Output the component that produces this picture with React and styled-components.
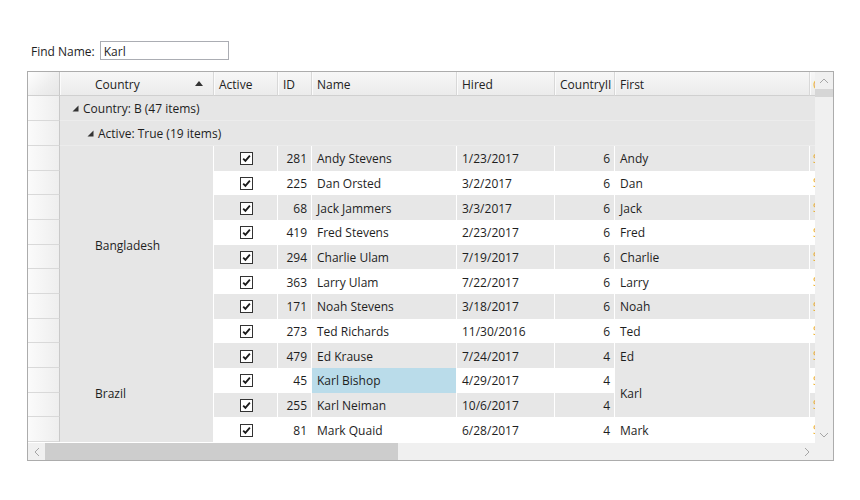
import React from 'react'
import styled, { createGlobalStyle } from 'styled-components'

const GlobalStyle = createGlobalStyle`
  html, body {
    margin: 0;
    padding: 0;
    background: #ffffff;
  }
  body {
    font-family: "Open Sans", "Noto Sans", sans-serif;
    font-size: 12px;
    color: #1e1e1e;
  }
`

const COLS = ['Country', 'Active', 'ID', 'Name', 'Hired', 'CountryII', 'First']

const groups = [
  {
    country: 'Bangladesh',
    rows: [
      [281, 'Andy Stevens', '1/23/2017', 6, 'Andy'],
      [225, 'Dan Orsted', '3/2/2017', 6, 'Dan'],
      [68, 'Jack Jammers', '3/3/2017', 6, 'Jack'],
      [419, 'Fred Stevens', '2/23/2017', 6, 'Fred'],
      [294, 'Charlie Ulam', '7/19/2017', 6, 'Charlie'],
      [363, 'Larry Ulam', '7/22/2017', 6, 'Larry'],
      [171, 'Noah Stevens', '3/18/2017', 6, 'Noah'],
      [273, 'Ted Richards', '11/30/2016', 6, 'Ted'],
    ],
  },
  {
    country: 'Brazil',
    rows: [
      [479, 'Ed Krause', '7/24/2017', 4, 'Ed'],
      [45, 'Karl Bishop', '4/29/2017', 4, 'Karl', 2],
      [255, 'Karl Neiman', '10/6/2017', 4, null],
      [81, 'Mark Quaid', '6/28/2017', 4, 'Mark'],
    ],
  },
]

const Triangle = () => (
  <svg width="7" height="7" viewBox="0 0 7 7">
    <polygon points="6.5,0.5 6.5,6.5 0.5,6.5" fill="#333" />
  </svg>
)

const SortUp = () => (
  <svg width="8" height="5" viewBox="0 0 8 5">
    <polygon points="4,0 8,5 0,5" fill="#333" />
  </svg>
)

const Check = () => (
  <CheckBox>
    <svg width="11" height="11" viewBox="0 0 11 11">
      <path d="M2.2 5.6 L4.4 7.9 L8.9 2.6" stroke="#1a1a1a" strokeWidth="1.8" fill="none" />
    </svg>
  </CheckBox>
)

const Chevron = ({ dir }) => {
  const d = {
    up: 'M1 5 L5 1 L9 5',
    down: 'M1 1 L5 5 L9 1',
    left: 'M5 1 L1 5 L5 9',
    right: 'M1 1 L5 5 L1 9',
  }[dir]
  const vertical = dir === 'up' || dir === 'down'
  return (
    <svg width={vertical ? 10 : 6} height={vertical ? 6 : 10} viewBox={vertical ? '0 0 10 6' : '0 0 6 10'}>
      <path d={d} stroke="#a6a6a6" strokeWidth="1" fill="none" />
    </svg>
  )
}

const App = () => {
  let index = 0
  const body = []

  groups.forEach((g) => {
    g.rows.forEach((r, i) => {
      const alt = index % 2 === 0
      const isSel = r[1] === 'Karl Bishop'
      body.push(<RowHead key={`rh${index}`} />)
      if (i === 0) {
        body.push(
          <CountryCell key={`c${index}`} $span={g.rows.length}>
            {g.country}
          </CountryCell>
        )
      }
      body.push(
        <Cell key={`a${index}`} $alt={alt} $align="center">
          <Check />
        </Cell>,
        <Cell key={`i${index}`} $alt={alt} $align="flex-end">{r[0]}</Cell>,
        <Cell key={`n${index}`} $alt={alt} $selected={isSel}>{r[1]}</Cell>,
        <Cell key={`h${index}`} $alt={alt}>{r[2]}</Cell>,
        <Cell key={`ci${index}`} $alt={alt} $align="flex-end">{r[3]}</Cell>
      )
      if (r[4] !== null) {
        body.push(
          <Cell key={`f${index}`} $alt={alt || r[5] > 1} $span={r[5] || 1}>
            {r[4]}
          </Cell>
        )
      }
      body.push(
        <EdgeCell key={`e${index}`} $alt={alt}>Seattle</EdgeCell>
      )
      index++
    })
  })

  return (
    <>
      <GlobalStyle />
      <Page>
        <FindBar>
          <FindLabel>Find Name:</FindLabel>
          <FindInput readOnly value="Karl" />
        </FindBar>
        <Frame>
          <Viewport>
            <Table>
              <CornerHead />
              {COLS.map((c) => (
                <HeaderCell key={c} $pad={c === 'Country' ? 35 : 5}>
                  <span>{c}</span>
                  {c === 'Country' && (
                    <SortMark>
                      <SortUp />
                    </SortMark>
                  )}
                </HeaderCell>
              ))}
              <HeaderCell $pad={3} $edge>
                <EdgeText>City</EdgeText>
              </HeaderCell>

              <RowHead />
              <GroupCell $indent={12}>
                <Triangle />
                Country: B (47 items)
              </GroupCell>
              <RowHead />
              <GroupCell $indent={27}>
                <Triangle />
                Active: True (19 items)
              </GroupCell>

              {body}
            </Table>
          </Viewport>
          <VScroll>
            <ArrowBox $v>
              <Chevron dir="up" />
            </ArrowBox>
            <VThumb />
            <Track />
            <ArrowBox $v>
              <Chevron dir="down" />
            </ArrowBox>
          </VScroll>
          <HScroll>
            <ArrowBox>
              <Chevron dir="left" />
            </ArrowBox>
            <HThumb />
            <Track />
            <ArrowBox>
              <Chevron dir="right" />
            </ArrowBox>
          </HScroll>
          <Corner />
        </Frame>
      </Page>
    </>
  )
}

export default App

const Page = styled.div`
  width: 860px;
  height: 500px;
  padding: 41px 0 0 27px;
  box-sizing: border-box;
`
const FindBar = styled.div`
  display: flex;
  align-items: center;
  height: 19px;
  padding-left: 4px;
  margin-bottom: 11px;
`
const FindLabel = styled.label`
  margin-right: 5px;
  font-size: 12px;
  padding-top: 1px;
`
const FindInput = styled.input`
  width: 129px;
  height: 19px;
  box-sizing: border-box;
  border: 1px solid #abadb3;
  padding: 1px 3px 0;
  font-family: "Open Sans", "Noto Sans", sans-serif;
  font-size: 12px;
  color: #1e1e1e;
  outline: none;
`
const Frame = styled.div`
  width: 807px;
  height: 390px;
  box-sizing: border-box;
  border: 1px solid #acacac;
  display: grid;
  grid-template-columns: 787px 18px;
  grid-template-rows: 371px 17px;
  background: #ffffff;
`
const Viewport = styled.div`
  overflow: hidden;
`
const Table = styled.div`
  display: grid;
  grid-template-columns: 32px 154px 64px 34px 145px 98px 60px 195px 5px;
  grid-template-rows: 24px 25px 25px repeat(12, 24.67px);
`
const CornerHead = styled.div`
  background: linear-gradient(135deg, #ffffff 0%, #eeeeee 60%, #e6e6e6 100%);
  border-right: 1px solid #c9c9c9;
  border-bottom: 1px solid #d0d0d0;
`
const HeaderCell = styled.div`
  display: flex;
  align-items: center;
  padding-left: ${(p) => p.$pad}px;
  padding-top: 1px;
  background: linear-gradient(#f7f7f7, #ebebeb);
  border-right: ${(p) => (p.$edge ? 'none' : '1px solid #d8d8d8')};
  border-bottom: 1px solid #d0d0d0;
  box-shadow: inset 1px 0 0 #fbfbfb;
  overflow: hidden;
  white-space: nowrap;
  color: #222;
`
const SortMark = styled.span`
  margin-left: auto;
  margin-right: 10px;
  display: flex;
  align-items: center;
  padding-bottom: 2px;
`
const EdgeText = styled.span`
  color: #e9a93b;
`
const RowHead = styled.div`
  background: linear-gradient(to right, #fbfbfb, #eeeeee);
  border-right: 1px solid #c9c9c9;
  border-bottom: 1px solid #d9d9d9;
`
const GroupCell = styled.div`
  grid-column: 2 / -1;
  display: flex;
  align-items: center;
  gap: 4px;
  padding-left: ${(p) => p.$indent}px;
  padding-top: 1px;
  background: #e6e6e6;
  border-bottom: 1px solid #ececec;
  white-space: nowrap;
`
const CountryCell = styled.div`
  grid-row: span ${(p) => p.$span};
  display: flex;
  align-items: center;
  padding-left: 35px;
  padding-top: 1px;
  background: #e6e6e6;
  border-right: 1px solid #ffffff;
`
const Cell = styled.div`
  grid-row: span ${(p) => p.$span || 1};
  display: flex;
  align-items: center;
  justify-content: ${(p) => p.$align || 'flex-start'};
  padding: 1px 4px 0 5px;
  background: ${(p) => (p.$selected ? '#badcea' : p.$alt ? '#e7e7e7' : '#ffffff')};
  border-right: 1px solid #ffffff;
  white-space: nowrap;
  overflow: hidden;
`
const EdgeCell = styled.div`
  display: flex;
  align-items: center;
  padding-left: 3px;
  background: ${(p) => (p.$alt ? '#e7e7e7' : '#ffffff')};
  color: #e9a93b;
  white-space: nowrap;
  overflow: hidden;
`
const CheckBox = styled.div`
  width: 13px;
  height: 13px;
  box-sizing: border-box;
  border: 1px solid #333333;
  background: #ffffff;
  display: flex;
  align-items: center;
  justify-content: center;
`
const VScroll = styled.div`
  display: flex;
  flex-direction: column;
  background: #f0f0f0;
`
const HScroll = styled.div`
  display: flex;
  background: #f0f0f0;
`
const ArrowBox = styled.div`
  flex: none;
  width: ${(p) => (p.$v ? '18px' : '17px')};
  height: 17px;
  display: flex;
  align-items: center;
  justify-content: center;
`
const VThumb = styled.div`
  flex: none;
  height: 8px;
  background: #d6d6d6;
`
const HThumb = styled.div`
  flex: none;
  width: 353px;
  background: #cdcdcd;
`
const Track = styled.div`
  flex: 1;
`
const Corner = styled.div`
  background: #f0f0f0;
`
